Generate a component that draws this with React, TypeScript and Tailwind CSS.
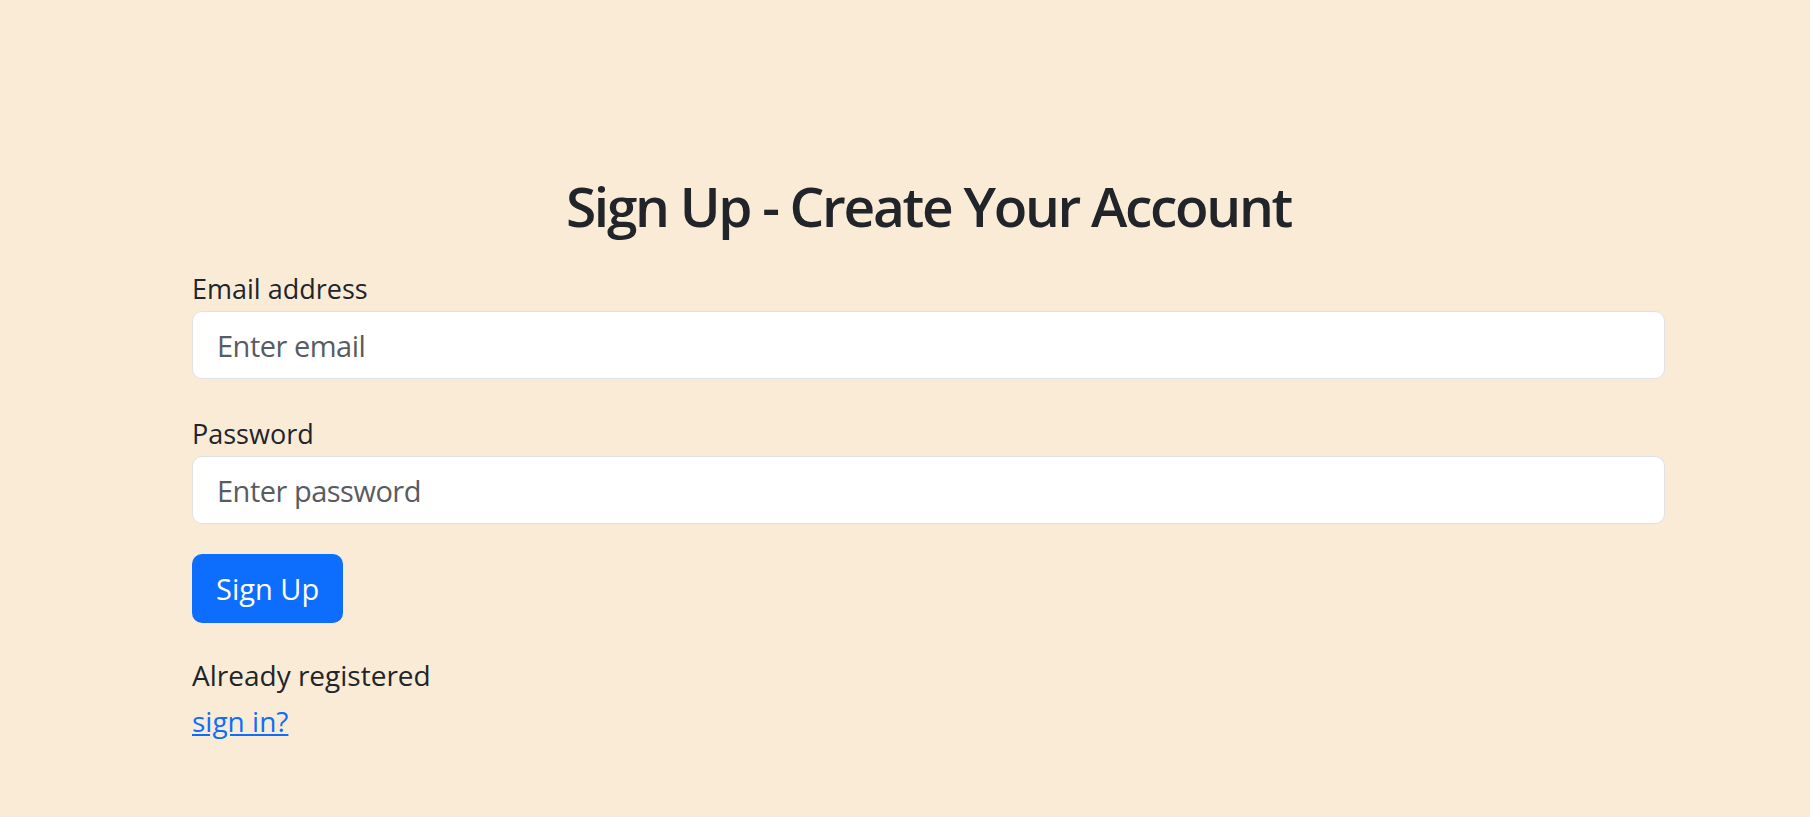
export default function App() {
  return (
    <main className="min-h-[817px] w-full bg-[#faebd7] text-[#212529] font-['Open_Sans','Noto_Sans',sans-serif]">
      <section className="ml-[192px] w-[1473px] pt-[172px]">
        <h1 className="text-center text-[55px] leading-[68px] font-semibold tracking-[-2.3px]">
          Sign Up - Create Your Account
        </h1>

        <form className="mt-[29px]" onSubmit={(e) => e.preventDefault()}>
          <label htmlFor="email" className="block text-[27px] leading-[40px] mb-[2px]">
            Email address
          </label>
          <input
            id="email"
            type="email"
            placeholder="Enter email"
            className="block h-[68px] w-full rounded-[10px] border border-[#dee2e6] bg-white px-[24px] text-[29px] tracking-[-0.5px] text-[#212529] outline-none placeholder:text-[#595c5f]"
          />

          <label htmlFor="password" className="mt-[35px] block text-[27px] leading-[40px] mb-[2px]">
            Password
          </label>
          <input
            id="password"
            type="password"
            placeholder="Enter password"
            className="block h-[68px] w-full rounded-[10px] border border-[#dee2e6] bg-white px-[24px] text-[29px] tracking-[-0.5px] text-[#212529] outline-none placeholder:text-[#595c5f]"
          />

          <button
            type="submit"
            className="mt-[30px] h-[69px] rounded-[10px] bg-[#0d6efd] px-[24px] text-[29px] text-white"
          >
            Sign Up
          </button>
        </form>

        <div className="mt-[29px] text-[28px] leading-[46px]">
          <p>Already registered</p>
          <a href="#" className="text-[#0d6efd] underline">
            sign in?
          </a>
        </div>
      </section>
    </main>
  )
}
